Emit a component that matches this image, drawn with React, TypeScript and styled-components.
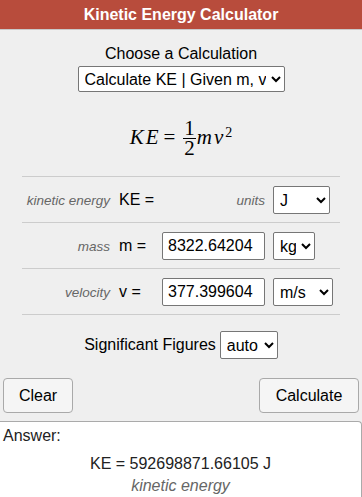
import React from "react";
import styled, { createGlobalStyle } from "styled-components";

const GlobalStyle = createGlobalStyle`
  html, body {
    margin: 0;
    padding: 0;
    background: #efefef;
  }
  body {
    font-family: "Liberation Sans", Arial, sans-serif;
    color: #000;
  }
`;

const Page = styled.div`
  width: 362px;
  min-height: 497px;
  display: flex;
  flex-direction: column;
  background: #efefef;
`;

const Header = styled.div`
  height: 29px;
  line-height: 29px;
  background: #b84c3c;
  border-bottom: 1px solid #c9c9c9;
  color: #fff;
  font-size: 16px;
  font-weight: bold;
  text-align: center;
`;

const Chooser = styled.div`
  display: flex;
  flex-direction: column;
  align-items: center;
  margin-top: 15px;
  font-size: 16px;
  gap: 3px;
  line-height: 18px;
`;

const Select = styled.select<{ $w: number }>`
  width: ${({ $w }) => $w}px;
  height: 28px;
  font-family: "Liberation Sans", Arial, sans-serif;
  font-size: 16px;
  color: #000;
  background: #fff;
  border: 1px solid #767676;
  border-radius: 2px;
  padding: 0 2px;
`;

const Formula = styled.div`
  height: 84px;
  box-sizing: border-box;
  padding-top: 28px;
  line-height: 28px;
  text-align: center;
  font-family: "Liberation Serif", "Times New Roman", serif;
  font-size: 21px;
`;

const Var = styled.span`
  font-style: italic;
  letter-spacing: 2px;
`;

const Eq = styled.span`
  margin: 0 8px 0 3px;
`;

const Frac = styled.span`
  display: inline-flex;
  flex-direction: column;
  align-items: center;
  vertical-align: 9px;
  margin: 0 1px 0 0;

  span:first-child {
    line-height: 17px;
    border-bottom: 1px solid #000;
    padding: 0 1px 1px;
  }
  span:last-child {
    line-height: 19px;
  }
`;

const Sup = styled.span`
  font-size: 14px;
  vertical-align: 7px;
  line-height: 0;
`;

const Rows = styled.div`
  margin: 0 22px;
  border-top: 1px solid #cccccc;
`;

const Row = styled.div`
  height: 46px;
  border-bottom: 1px solid #cccccc;
  display: grid;
  grid-template-columns: 88px 36px 103px auto;
  column-gap: 8px;
  align-items: center;
  padding-top: 1px;
  box-sizing: border-box;
`;

const Label = styled.span`
  font-style: italic;
  color: #666;
  font-size: 13.5px;
  text-align: right;
`;

const Symbol = styled.span`
  font-size: 16px;
  padding-left: 1px;
  white-space: nowrap;
`;

const Input = styled.input`
  width: 103px;
  height: 28px;
  box-sizing: border-box;
  font-family: "Liberation Sans", Arial, sans-serif;
  font-size: 16px;
  padding: 0 5px;
  border: 1px solid #767676;
  border-radius: 2px;
  background: #fff;
`;

const SigRow = styled.div`
  display: flex;
  align-items: center;
  justify-content: center;
  gap: 4px;
  margin-top: 16px;
  font-size: 16px;
`;

const Buttons = styled.div`
  display: flex;
  justify-content: space-between;
  margin: 19px 3px 0 3px;
`;

const Button = styled.button<{ $w: number }>`
  width: ${({ $w }) => $w}px;
  height: 35px;
  font-family: "Liberation Sans", Arial, sans-serif;
  font-size: 16px;
  color: #000;
  background: #f5f5f5;
  border: 1px solid #a9a9a9;
  border-radius: 4px;
`;

const Answer = styled.div`
  flex: 1;
  margin-top: 8px;
  background: #fff;
  border-top: 1px solid #aaa;
  border-right: 1px solid #aaa;
  border-top-right-radius: 4px;
  padding: 5px 3px 0;
`;

const AnswerTitle = styled.div`
  font-size: 16px;
  color: #222;
  line-height: 18px;
`;

const Result = styled.div`
  text-align: center;
  font-size: 16px;
  color: #222;
  margin-top: 10px;
  line-height: 18px;
`;

const ResultName = styled.div`
  text-align: center;
  font-size: 16px;
  font-style: italic;
  color: #666;
  margin-top: 4px;
  line-height: 18px;
`;

export default function App() {
  return (
    <>
      <GlobalStyle />
      <Page>
        <Header>Kinetic Energy Calculator</Header>
        <Chooser>
          <span>Choose a Calculation</span>
          <Select $w={207} style={{ height: 26 }} defaultValue="ke">
            <option value="ke">Calculate KE | Given m, v</option>
          </Select>
        </Chooser>
        <Formula>
          <Var>KE</Var>
          <Eq>=</Eq>
          <Frac>
            <span>1</span>
            <span>2</span>
          </Frac>
          <Var>mv</Var>
          <Sup>2</Sup>
        </Formula>
        <Rows>
          <Row>
            <Label>kinetic energy</Label>
            <Symbol>KE =</Symbol>
            <Label>units</Label>
            <Select $w={57} defaultValue="J">
              <option>J</option>
            </Select>
          </Row>
          <Row>
            <Label>mass</Label>
            <Symbol>m =</Symbol>
            <Input defaultValue="8322.64204" />
            <Select $w={42} defaultValue="kg">
              <option>kg</option>
            </Select>
          </Row>
          <Row>
            <Label>velocity</Label>
            <Symbol>v =</Symbol>
            <Input defaultValue="377.399604" />
            <Select $w={60} defaultValue="m/s">
              <option>m/s</option>
            </Select>
          </Row>
        </Rows>
        <SigRow>
          <span>Significant Figures</span>
          <Select $w={58} defaultValue="auto">
            <option>auto</option>
          </Select>
        </SigRow>
        <Buttons>
          <Button $w={70}>Clear</Button>
          <Button $w={100}>Calculate</Button>
        </Buttons>
        <Answer>
          <AnswerTitle>Answer:</AnswerTitle>
          <Result>KE = 592698871.66105 J</Result>
          <ResultName>kinetic energy</ResultName>
        </Answer>
      </Page>
    </>
  );
}
